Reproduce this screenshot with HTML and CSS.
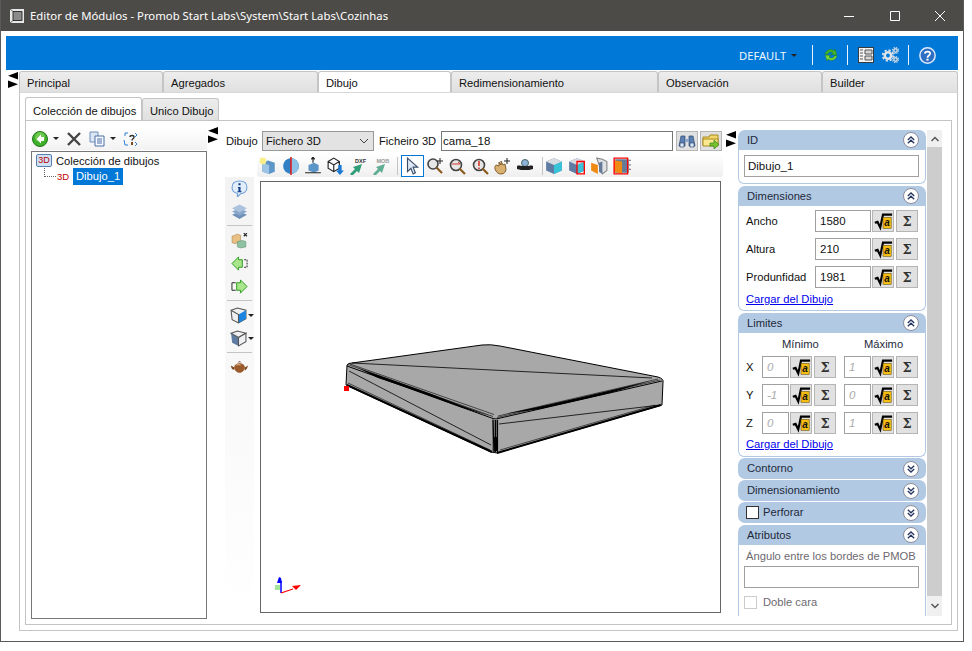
FILE: index.html
```html
<!DOCTYPE html>
<html lang="es">
<head>
    <meta charset="UTF-8">
    <title>Editor de Módulos</title>
    <link rel="stylesheet" href="styles.css">
</head>
<body>

<svg class="sprite" xmlns="http://www.w3.org/2000/svg">
    <symbol id="i-split" viewBox="0 0 10 16"><path d="M10 0v7.500L0 3.750z M0 8.500l10 3.750L0 16z" fill="#000"/></symbol>
    <symbol id="i-sqrt" viewBox="0 0 22 22"><path d="M2 13l3-1 3 6 3-14h10" fill="none" stroke="#000" stroke-width="2.400"/><rect x="11" y="7" width="9" height="12" fill="#f7bd13" stroke="#5c4800" stroke-width=".6"/><text class="sqrt-a" x="12.500" y="17">a</text></symbol>
    <symbol id="i-up" viewBox="0 0 16 16"><circle cx="8" cy="8" r="7.500" fill="#fff" stroke="#8d8d98"/><path d="M4.800 8L8 5l3.200 3M4.800 11.200L8 8.200l3.200 3" fill="none" stroke="#26365f" stroke-width="1.300"/></symbol>
    <symbol id="i-down" viewBox="0 0 16 16"><circle cx="8" cy="8" r="7.500" fill="#fff" stroke="#8d8d98"/><path d="M4.800 4.800L8 7.800l3.200-3M4.800 8L8 11l3.200-3" fill="none" stroke="#26365f" stroke-width="1.300"/></symbol>
    <symbol id="i-cube" viewBox="0 0 16 16"><path d="M1 4l7-3 7 3v8l-7 3-7-3z" fill="#5f7da3"/><path d="M8 7l7-3v8l-7 3z" fill="#37c4d8"/><path d="M1 4l7-3 7 3-7 3z" fill="#d9dde2"/></symbol>
</svg>

<div class="window">
    <div class="titlebar">
        <svg class="app-icon" viewBox="0 0 16 16"><path d="M1 1h14v14H1z" fill="#e8e8e8"/><path d="M4 3.500h9v9H4z" fill="#8a8a8a" stroke="#333"/><path d="M1 1l3 2.500M1 15l3-2.500" stroke="#666"/></svg>
        <span class="title">Editor de Módulos - Promob Start Labs\System\Start Labs\Cozinhas</span>
        <span class="win-btn"><svg width="12" height="12" viewBox="0 0 12 12"><path d="M1 6.500h10" stroke="#fff"/></svg></span>
        <span class="win-btn"><svg width="12" height="12" viewBox="0 0 12 12"><path d="M1.500 1.500h9v9h-9z" fill="none" stroke="#fff"/></svg></span>
        <span class="win-btn"><svg width="12" height="12" viewBox="0 0 12 12"><path d="M1 1l10 10M11 1L1 11" stroke="#fff"/></svg></span>
    </div>

    <div class="client">
        <div class="topbar">
            <span class="profile">DEFAULT</span>
            <span class="caret caret-top"></span>
            <span class="bar-sep sep-a"></span>
            <svg class="bar-ico ico-sync" viewBox="0 0 16 16"><path d="M2 7c1-4 6-6 9-3l1-2 2 6-6-.500 2-1.500C8 4 5 5 4.500 7.500z" fill="#43b52d" stroke="#1f7a16" stroke-width=".5"/><path d="M14 9c-1 4-6 6-9 3l-1 2-2-6 6 .500-2 1.500c2 2 5 1 5.500-1.500z" fill="#78d63a" stroke="#1f7a16" stroke-width=".5"/></svg>
            <span class="bar-sep sep-b"></span>
            <svg class="bar-ico ico-book" viewBox="0 0 16 16"><path d="M0 0h16v16H0z" fill="#3a3a3a"/><path d="M1 1h14v14H1z" fill="#f4f4f4"/><path d="M2 3h3M2 6h3M2 9h3M2 12h3" stroke="#555"/><path d="M7 3h7v4H7zM7 9h7v4H7z" fill="#d6d6d6" stroke="#555"/></svg>
            <svg class="bar-ico ico-gears" viewBox="0 0 17 16"><circle cx="6" cy="8.500" r="3.200" fill="none" stroke="#dfe4ea" stroke-width="2.600"/><circle cx="6" cy="8.500" r="5.300" fill="none" stroke="#dfe4ea" stroke-width="1.800" stroke-dasharray="2.200 1.950"/><circle cx="13.500" cy="3.500" r="1.700" fill="none" stroke="#d5dbe2" stroke-width="1.500"/><circle cx="13.500" cy="3.500" r="3" fill="none" stroke="#d5dbe2" stroke-width="1.100" stroke-dasharray="1.300 1.050"/><circle cx="13.500" cy="12.500" r="1.700" fill="none" stroke="#d5dbe2" stroke-width="1.500"/><circle cx="13.500" cy="12.500" r="3" fill="none" stroke="#d5dbe2" stroke-width="1.100" stroke-dasharray="1.300 1.050"/></svg>
            <span class="bar-sep sep-c"></span>
            <svg class="bar-ico ico-help" viewBox="0 0 16 16"><circle cx="8" cy="8" r="7.200" fill="#2e6fc4" stroke="#dfeafa" stroke-width="1.400"/><path d="M5.500 6.200C5.700 3.700 10.500 3.700 10.500 6.200 10.500 8 8 8 8 10" fill="none" stroke="#fff" stroke-width="1.600"/><path d="M7 11h2v1.800H7z" fill="#fff"/></svg>
        </div>

        <div class="main">
            <svg class="split split-main"><use href="#i-split"/></svg>
            <div class="outer">
                <div class="tabs">
                    <div class="tab t1">Principal</div>
                    <div class="tab t2">Agregados</div>
                    <div class="tab t3 active">Dibujo</div>
                    <div class="tab t4">Redimensionamiento</div>
                    <div class="tab t5">Observación</div>
                    <div class="tab t6">Builder</div>
                </div>
                <div class="outer-panel">
                    <div class="tabs inner-tabs">
                        <div class="tab t7 active">Colección de dibujos</div>
                        <div class="tab t8">Unico Dibujo</div>
                    </div>
                    <div class="inner-panel">

                        <div class="left-col">
                            <div class="tree-tools">
                                <svg class="tool t-back" viewBox="0 0 16 16"><circle cx="8" cy="8" r="7.500" fill="#3fae2a" stroke="#1f7a16"/><circle cx="8" cy="6" r="5" fill="#9be36f" opacity=".5"/><path d="M9 3.500L4.500 8 9 12.500V10h3V6H9z" fill="#fff"/></svg>
                                <span class="caret c-back"></span>
                                <svg class="tool t-del" viewBox="0 0 16 16"><path d="M2 2l12 12M14 2L2 14" stroke="#444" stroke-width="2.400"/></svg>
                                <svg class="tool t-copy" viewBox="0 0 16 16"><path d="M1 1h8v10H1z" fill="#dce7f6" stroke="#6f8db8"/><path d="M6 5h9v10H6z" fill="#f6f9ff" stroke="#4c6ea3"/><path d="M8 8h5M8 10h5M8 12h5" stroke="#4c6ea3"/></svg>
                                <span class="caret c-copy"></span>
                                <svg class="tool t-tree" viewBox="0 0 16 16"><path d="M3 5V2h3M13 2l2 2-2 2M2 9l1 5h3M13 11l2 2-2 2" fill="none" stroke="#2f7fd6"/><path d="M8 6c0-2 4-2 4 0 0 2-2 1.500-2 3.500" fill="none" stroke="#333" stroke-width="1.400"/><path d="M9 11h2v3H9z" fill="#7a4a1c"/></svg>
                            </div>
                            <div class="tree">
                                <div class="node">
                                    <span class="badge">3D</span>
                                    <span>Colección de dibujos</span>
                                </div>
                                <div class="node sub">
                                    <span class="branch"></span>
                                    <span class="red3d">3D</span>
                                    <span class="selected">Dibujo_1</span>
                                </div>
                            </div>
                        </div>

                        <div class="arrow-col first"><svg class="split"><use href="#i-split"/></svg></div>

                        <div class="mid-col">
                            <div class="file-row">
                                <span class="lbl-dibujo">Dibujo</span>
                                <div class="select">
                                    <span>Fichero 3D</span>
                                    <svg width="10" height="6" viewBox="0 0 10 6"><path d="M1 1l4 4 4-4" fill="none" stroke="#444"/></svg>
                                </div>
                                <span class="lbl-file">Ficheiro 3D</span>
                                <input class="field file-input" value="cama_18">
                                <span class="btn file-btn"><svg width="18" height="16" viewBox="0 0 18 16"><path d="M3 3h4v10H1z" fill="#5b7fb0" stroke="#2e4a73" stroke-width=".7"/><path d="M11 3h4l2 10h-6z" fill="#5b7fb0" stroke="#2e4a73" stroke-width=".7"/><path d="M7 6h4v3H7z" fill="#8ea7c9"/><path d="M2 10h4v4H2zM12 10h4v4h-4z" fill="#dfe9f6" stroke="#2e4a73" stroke-width=".7"/></svg></span>
                                <span class="btn file-btn"><svg width="18" height="16" viewBox="0 0 18 16"><path d="M1 4h6l1-2h8v10H1z" fill="#f3d66b" stroke="#a68a1e"/><path d="M1 6h15v7H1z" fill="#fbe88f" stroke="#a68a1e"/><path d="M8 10h4V7l5 4.500L12 16v-3H8z" fill="#76c52f" stroke="#3f7f14" stroke-width=".7"/></svg></span>
                            </div>

                            <div class="view-tools">
                                <span class="vt"><svg class="ic" viewBox="0 0 16 16"><path d="M3 5l5-2 6 2v8l-5 2-6-2z" fill="#5c95c7"/><path d="M3 5l6 2v8l-6-2z" fill="#9cc4e4"/><circle cx="3.500" cy="3.500" r="3" fill="#f8ef8b"/></svg></span>
                                <span class="vt"><svg class="ic" viewBox="0 0 16 16"><circle cx="8" cy="8" r="7" fill="#2f80c4"/><path d="M8 1a7 7 0 0 1 0 14z" fill="#8dc0e6"/><path d="M8 0v16" stroke="#e21b1b" stroke-width="1.400"/></svg></span>
                                <span class="vt"><svg class="ic" viewBox="0 0 16 16"><path d="M4 7l5-2 4 2v5l-4 2-5-2z" fill="#5c95c7"/><path d="M8 5V0M6.500 2L8 0l1.500 2M1 14h14" stroke="#222"/></svg></span>
                                <span class="vt"><svg class="ic" viewBox="0 0 16 16"><path d="M1 4l5-3 5 3v6l-5 3-5-3zM1 4l5 3 5-3M6 7v6" fill="#fff" stroke="#222"/><path d="M10 7h3v5h2l-3.500 4L8 12h2z" fill="#1b78d3"/></svg></span>
                                <span class="vt"><svg class="ic" viewBox="0 0 18 18"><path d="M1 17l5-5-2-2 9-3-3 9-2-2-5 5z" fill="#2f9d77"/><text class="mini-tag" x="6" y="6">DXF</text></svg></span>
                                <span class="vt"><svg class="ic" viewBox="0 0 18 18"><path d="M1 17l5-5-2-2 9-3-3 9-2-2-5 5z" fill="#5fae93"/><text class="mini-tag pale" x="4.500" y="6">MOB</text></svg></span>
                                <span class="tool-sep sep-one"></span>
                                <span class="vt selected-tool"><svg class="ic" viewBox="0 0 16 16"><path d="M4 1v12l3-3 2 5 2-1-2-5h4z" fill="#dfe8f5" stroke="#3b4c66"/></svg></span>
                                <span class="vt"><svg class="ic" viewBox="0 0 18 18"><circle cx="7" cy="7" r="5" fill="#e6e6e6" stroke="#444" stroke-width="1.600"/><path d="M10.500 10.500L16 16" stroke="#8a5a1e" stroke-width="2.200"/><path d="M14 1v6M11 4h6" stroke="#222"/></svg></span>
                                <span class="vt"><svg class="ic" viewBox="0 0 18 18"><circle cx="8" cy="8" r="5.500" fill="#e6e6e6" stroke="#444" stroke-width="1.600"/><path d="M11.500 11.500L17 17" stroke="#8a5a1e" stroke-width="2.200"/><path d="M4 7h8l-2-2" fill="none" stroke="#d63a2a"/></svg></span>
                                <span class="vt"><svg class="ic" viewBox="0 0 18 18"><circle cx="8" cy="8" r="5.500" fill="#e6e6e6" stroke="#444" stroke-width="1.600"/><path d="M11.500 11.500L17 17" stroke="#8a5a1e" stroke-width="2.200"/><path d="M8 4v5M8 10.500v1.500" stroke="#d63a2a" stroke-width="1.600"/></svg></span>
                                <span class="vt"><svg class="ic" viewBox="0 0 18 18"><path d="M3 14c-2-3-1-5 0-6l3 1V5l2 3V4l2 4 2-1 1 5c0 3-2 5-5 5-2 0-4-1-5-3z" fill="#d9b070" stroke="#6d4515" stroke-width=".8"/><path d="M14 1v6M11 4h6" stroke="#222"/></svg></span>
                                <span class="vt"><svg class="ic" viewBox="0 0 18 18"><circle cx="9" cy="6" r="3.500" fill="#8fb2d8" stroke="#466"/><path d="M1 9c2-1 4 0 5 0h6c1 0 3-1 5 0v3l-4 1H5l-4-1z" fill="#222"/></svg></span>
                                <span class="tool-sep sep-two"></span>
                                <span class="vt"><svg class="ic" viewBox="0 0 16 16"><use href="#i-cube"/></svg></span>
                                <span class="vt"><svg class="ic" viewBox="0 0 16 16"><use href="#i-cube"/><path d="M8 4h6.500v11H8z" fill="none" stroke="#f00" stroke-width="1.200"/></svg></span>
                                <span class="vt"><svg class="ic" viewBox="0 0 16 16"><path d="M6 1l5 1 4 2v8l-4 3z" fill="#e0e2e6" stroke="#888"/><path d="M8 5l3-1v11l-3-2z" fill="#667b98"/><path d="M1 5l6 2v8l-6-3z" fill="#f08a13"/></svg></span>
                                <span class="vt"><svg class="ic" viewBox="0 0 16 16"><path d="M2 2h12v12H2z" fill="#667b98"/><path d="M1 3l7 1v11l-7-2z" fill="#f08a13"/><path d="M1 1h12v14H1z" fill="none" stroke="#f00" stroke-width="1.200"/><path d="M14 3h2M14 7h2M14 11h2" stroke="#888"/></svg></span>
                            </div>

                            <div class="work">
                                <div class="side-tools">
                                    <span class="st"><svg class="ic" viewBox="0 0 16 16"><path d="M8 1c4 0 7 2 7 6s-3 6-6 6l-3 3v-3.500C3 12 1 10 1 7c0-4 3-6 7-6z" fill="#e2eefb" stroke="#6f9fd8"/><path d="M7 3h2v2H7zM6.500 6.500H9v4h1V11.500H6V10.500h1v-3h-.5z" fill="#143f8a"/></svg></span>
                                    <span class="st"><svg class="ic" viewBox="0 0 16 16"><path d="M1 11l7-3 7 3-7 4z" fill="#6f90b8"/><path d="M1 8l7-3 7 3-7 4z" fill="#8aa7cb"/><path d="M1 5l7-3.500L15 5l-7 4z" fill="#abc3df"/></svg></span>
                                    <span class="st-sep"></span>
                                    <span class="st"><svg class="ic" viewBox="0 0 16 16"><path d="M1 4l5-2 3 1v6l-5 2-3-1z" fill="#e9bf83" stroke="#a67f3e" stroke-width=".5"/><path d="M6 9l5-1 3 1v5l-5 1-3-1z" fill="#8fc2a2" stroke="#5a8f70" stroke-width=".5"/><path d="M12 1l3 3M15 1l-3 3" stroke="#222"/></svg></span>
                                    <span class="st"><svg class="ic" viewBox="0 0 18 16"><path d="M1 8l7-7v3h4v8H8v3z" fill="#a9e58a" stroke="#2c9a1e"/><path d="M14 4h3v8h-3" fill="none" stroke="#222" stroke-dasharray="2 1"/></svg></span>
                                    <span class="st"><svg class="ic" viewBox="0 0 18 16"><path d="M17 8l-7-7v3H6v8h4v3z" fill="#a9e58a" stroke="#2c9a1e"/><path d="M5 4H1v8h4" fill="none" stroke="#222"/></svg></span>
                                    <span class="st-sep"></span>
                                    <span class="st with-caret"><svg class="ic" viewBox="0 0 16 16"><path d="M1 3l6-2 8 2v8l-7 4-6-3z" fill="#eef0f2" stroke="#555"/><path d="M8 7l7-4v8l-7 4z" fill="#1b84e0"/><path d="M1 3l7 4v8" fill="none" stroke="#555"/></svg><span class="caret"></span></span>
                                    <span class="st with-caret"><svg class="ic" viewBox="0 0 16 16"><path d="M1 3l7 4v8l-6-3z" fill="#5f7da3"/><path d="M1 3l6-2 8 2-7 4z" fill="#eef0f2" stroke="#555"/><path d="M8 7l7-4v8l-7 4z" fill="#eef0f2" stroke="#555"/></svg><span class="caret"></span></span>
                                    <span class="st-sep"></span>
                                    <span class="st"><svg class="ic" viewBox="0 0 16 16"><path d="M3 8c0-3 3-4 5-4s5 1 5 4-3 5-5 5-5-2-5-5z" fill="#9a5a2c"/><path d="M13 8l3-2-1 3-2 2zM3 8L0 6c0 2 1 4 3 4z" fill="#7a431e"/><path d="M6 3h4l-2-1z" fill="#5e3113"/><path d="M5 6c1-1 3-1 4 0" stroke="#e0b48c" fill="none"/></svg></span>
                                </div>
                                <div class="viewport">
                                    <svg class="scene" viewBox="261 182 459 430">
                                        <path d="M347 365Q348 363 352 363L482 345Q490 344 500 346L658 377Q664 379 663 382L662 405L497 453L491 452L346 385z" fill="#a8a8a8" stroke="#000"/>
                                        <path d="M352 363L652 378M349 371L491 445M499 424L660 405" fill="none" stroke="#000" stroke-width=".8"/>
                                        <path d="M347 366L493 418.500L496 419L662 381" fill="none" stroke="#000"/>
                                        <path d="M348 364.500L493 416.500M350 364L494 414.500M497 417.500L660 380M498 416L658 379" fill="none" stroke="#000" stroke-width=".6"/>
                                        <path d="M358 368L378 375L405 384.500L430 393.500L460 405L490 416L460 407L430 396L405 387L378 378z" fill="#000"/>
                                        <path d="M505 414L540 406.500L580 397.500L610 390.500L650 381L610 393L580 400L540 409z" fill="#000"/>
                                        <path d="M492 419h6v32h-6z" fill="#777"/>
                                        <path d="M493 420L494 452M495.500 420v32M497.500 420v32" stroke="#000" stroke-width="1.200"/>
                                        <path d="M494 437h3v14h-3z" fill="#000"/>
                                        <path d="M347 385L492 452M497 453L661 405" fill="none" stroke="#000" stroke-width="2"/>
                                        <path d="M348 383L490 450M500 450L655 405" fill="none" stroke="#000" stroke-width=".6"/>
                                        <path d="M344 386h5v5h-5z" fill="#f00"/>
                                        <path d="M275 585h5v5h-5z" fill="#a6e69a"/>
                                        <path d="M281 593v-12" stroke="#00f" stroke-width="1.500"/>
                                        <path d="M277 583l2-6 2 1 1 5z" fill="#00f"/>
                                        <path d="M281 593l12-4" stroke="#f00" stroke-width="1.300"/>
                                        <path d="M292 586l9-1-5 5z" fill="#f00"/>
                                    </svg>
                                </div>
                            </div>
                        </div>

                        <div class="arrow-col second"><svg class="split"><use href="#i-split"/></svg></div>

                        <div class="right-col">
                            <div class="sections">
                                <div class="section">
                                    <div class="sec-head"><span>ID</span><svg class="chev"><use href="#i-up"/></svg></div>
                                    <div class="sec-body body-id"><input class="field wide" value="Dibujo_1"></div>
                                </div>
                                <div class="section">
                                    <div class="sec-head"><span>Dimensiones</span><svg class="chev"><use href="#i-up"/></svg></div>
                                    <div class="sec-body body-dim">
                                        <div class="row"><span class="row-lbl">Ancho</span><input class="field num" value="1580"><span class="btn calc"><svg><use href="#i-sqrt"/></svg></span><span class="btn sigma">Σ</span></div>
                                        <div class="row"><span class="row-lbl">Altura</span><input class="field num" value="210"><span class="btn calc"><svg><use href="#i-sqrt"/></svg></span><span class="btn sigma">Σ</span></div>
                                        <div class="row"><span class="row-lbl">Produnfidad</span><input class="field num" value="1981"><span class="btn calc"><svg><use href="#i-sqrt"/></svg></span><span class="btn sigma">Σ</span></div>
                                        <a class="link" href="#">Cargar del Dibujo</a>
                                    </div>
                                </div>
                                <div class="section sec-lim">
                                    <div class="sec-head"><span>Limites</span><svg class="chev"><use href="#i-up"/></svg></div>
                                    <div class="sec-body body-lim">
                                        <div class="lim-head"><span>Mínimo</span><span>Máximo</span></div>
                                        <div class="row"><span class="axis">X</span><input class="field lim" value="0" disabled><span class="btn calc"><svg><use href="#i-sqrt"/></svg></span><span class="btn sigma">Σ</span><input class="field lim lim-max" value="1" disabled><span class="btn calc"><svg><use href="#i-sqrt"/></svg></span><span class="btn sigma">Σ</span></div>
                                        <div class="row"><span class="axis">Y</span><input class="field lim" value="-1" disabled><span class="btn calc"><svg><use href="#i-sqrt"/></svg></span><span class="btn sigma">Σ</span><input class="field lim lim-max" value="0" disabled><span class="btn calc"><svg><use href="#i-sqrt"/></svg></span><span class="btn sigma">Σ</span></div>
                                        <div class="row"><span class="axis">Z</span><input class="field lim" value="0" disabled><span class="btn calc"><svg><use href="#i-sqrt"/></svg></span><span class="btn sigma">Σ</span><input class="field lim lim-max" value="1" disabled><span class="btn calc"><svg><use href="#i-sqrt"/></svg></span><span class="btn sigma">Σ</span></div>
                                        <a class="link" href="#">Cargar del Dibujo</a>
                                    </div>
                                </div>
                                <div class="section closed"><div class="sec-head"><span>Contorno</span><svg class="chev"><use href="#i-down"/></svg></div></div>
                                <div class="section closed"><div class="sec-head"><span>Dimensionamiento</span><svg class="chev"><use href="#i-down"/></svg></div></div>
                                <div class="section closed"><div class="sec-head"><span class="check-wrap"><span class="check"></span>Perforar</span><svg class="chev"><use href="#i-down"/></svg></div></div>
                                <div class="section last">
                                    <div class="sec-head"><span>Atributos</span><svg class="chev"><use href="#i-up"/></svg></div>
                                    <div class="sec-body body-attr">
                                        <div class="muted">Ángulo entre los bordes de PMOB</div>
                                        <input class="field wide" value="">
                                        <div class="check-row"><span class="check dim"></span><span class="muted">Doble cara</span></div>
                                    </div>
                                </div>
                            </div>
                            <div class="scrollbar">
                                <span class="sb-btn"><svg width="8" height="6" viewBox="0 0 8 6"><path d="M.5 5L4 1.500 7.500 5" fill="none" stroke="#555" stroke-width="1.500"/></svg></span>
                                <span class="sb-thumb"></span>
                                <span class="sb-btn"><svg width="8" height="6" viewBox="0 0 8 6"><path d="M.5 1L4 4.500 7.500 1" fill="none" stroke="#555" stroke-width="1.500"/></svg></span>
                            </div>
                        </div>

                    </div>
                </div>
            </div>
        </div>
    </div>
</div>

</body>
</html>
```

FILE: styles.css
```css
html, body {
    margin: 0;
    padding: 0;
    background: #fff;
}
body {
    font-family: "Liberation Sans", Arial, sans-serif;
    font-size: 11.200px;
    color: #111;
}
.sprite {
    display: none;
}
.window {
    width: 964px;
    height: 642px;
    box-sizing: border-box;
    border: 1px solid #5a5a5a;
    border-top: none;
    background: #fff;
    display: flex;
    flex-direction: column;
}
.titlebar {
    height: 31px;
    flex: none;
    background: #4d4b48;
    display: flex;
    align-items: center;
    color: #fff;
    font-family: "Noto Sans", sans-serif;
    font-size: 11.350px;
}
.app-icon {
    width: 16px;
    height: 16px;
    margin-left: 8px;
    margin-right: 5px;
}
.title {
    flex: 1;
}
.win-btn {
    width: 45.500px;
    display: flex;
    justify-content: center;
    align-items: center;
}
.client {
    flex: 1;
    padding: 5px 5px 0 5px;
    display: flex;
    flex-direction: column;
    min-height: 0;
}
.topbar {
    height: 34px;
    box-sizing: border-box;
    padding-top: 4px;
    flex: none;
    background: #0078d7;
    display: flex;
    align-items: center;
    color: #f2f7fc;
}
.profile {
    margin-left: 733px;
    font-family: "Noto Sans", sans-serif;
    font-size: 11.200px;
}
.caret {
    display: inline-block;
    width: 0;
    height: 0;
    border-left: 3px solid transparent;
    border-right: 3px solid transparent;
    border-top: 3px solid #222;
}
.caret-top {
    margin-left: 5px;
}
.bar-sep {
    width: 1px;
    height: 20px;
    background: #eaf3fb;
}
.sep-a {
    margin-left: 15px;
}
.sep-b {
    margin-left: 8px;
}
.sep-c {
    margin-left: 9px;
}
.bar-ico {
    width: 16px;
    height: 16px;
    flex: none;
}
.ico-sync {
    margin-left: 10px;
}
.ico-book {
    margin-left: 10px;
}
.ico-gears {
    width: 17px;
    margin-left: 8px;
}
.ico-help {
    width: 17px;
    height: 17px;
    margin-left: 10px;
}
.main {
    flex: 1;
    display: flex;
    min-height: 0;
    padding-top: 1px;
}
.split {
    width: 10px;
    height: 16px;
    flex: none;
}
.split-main {
    margin: 1px 1px 0 2px;
}
.outer {
    width: 939px;
    display: flex;
    flex-direction: column;
}
.tabs {
    display: flex;
    height: 21px;
    flex: none;
}
.tab {
    box-sizing: border-box;
    border: 1px solid #c4c4c4;
    border-bottom: none;
    border-radius: 3px 3px 0 0;
    background: linear-gradient(#ededed, #e0e0e0);
    padding: 4px 0 0 7px;
    line-height: 15px;
    white-space: nowrap;
}
.tab.active {
    background: #fff;
}
.t1 { width: 144px; }
.t2 { width: 155px; }
.t3 { width: 133px; }
.t4 { width: 207px; }
.t5 { width: 164px; }
.t6 { width: 136px; }
.t7 { width: 117px; padding-top: 6px; margin-top: -1px; height: 23px; }
.t8 { width: 77px; padding-top: 5px; height: 22px; }
.outer-panel {
    height: 539px;
    box-sizing: border-box;
    border: 1px solid #c4c4c4;
    border-top: 1px solid #d8d8d8;
    padding: 5px;
    display: flex;
    flex-direction: column;
}
.inner-tabs {
    height: 22px;
}
.inner-panel {
    flex: 1;
    min-height: 0;
    border: 1px solid #c4c4c4;
    display: flex;
    padding-left: 5px;
}
.left-col {
    width: 176px;
    padding-top: 6px;
    flex: none;
}
.tree-tools {
    height: 23px;
    box-sizing: border-box;
    background: linear-gradient(#fff, #f2f2f2);
    display: flex;
    align-items: center;
    padding-left: 1px;
}
.tool {
    width: 16px;
    height: 16px;
    flex: none;
}
.c-back { margin-left: 5px; }
.t-del { margin-left: 7px; }
.t-copy { margin-left: 7px; }
.c-copy { margin-left: 5px; }
.t-tree { margin-left: 6px; }
.tree {
    height: 468px;
    margin-top: 1px;
    box-sizing: border-box;
    width: 176px;
    border: 1px solid #777;
    background: #fff;
    padding: 1px 4px;
}
.node {
    display: flex;
    align-items: center;
    height: 15px;
}
.badge {
    width: 16px;
    height: 13px;
    box-sizing: border-box;
    border: 1px solid #5a7fae;
    border-radius: 2px;
    background: #cfe3f7;
    color: #c00000;
    font-size: 9px;
    line-height: 11px;
    text-align: center;
    margin-right: 4px;
}
.sub {
    height: 17px;
}
.branch {
    width: 12px;
    height: 9px;
    margin-left: 8px;
    margin-top: -9px;
    box-sizing: border-box;
    border-left: 1px dotted #666;
    border-bottom: 1px dotted #666;
}
.red3d {
    color: #c00000;
    font-size: 9.500px;
    width: 16px;
    margin-left: 1px;
}
.selected {
    background: #0078d7;
    color: #fff;
    padding: 1px 3px 2px 3px;
    line-height: 14px;
}
.arrow-col {
    flex: none;
}
.arrow-col.first {
    width: 18px;
    padding: 6px 0 0 1px;
    box-sizing: border-box;
}
.arrow-col.second {
    width: 15px;
    padding: 10px 0 0 3px;
    box-sizing: border-box;
}
.mid-col {
    width: 498px;
    flex: none;
    padding-top: 10px;
}
.file-row {
    display: flex;
    align-items: center;
    height: 20px;
}
.lbl-dibujo {
    margin-left: 1px;
    width: 36px;
}
.select {
    width: 112px;
    height: 20px;
    box-sizing: border-box;
    border: 1px solid #999;
    background: #e3e3e3;
    display: flex;
    align-items: center;
    justify-content: space-between;
    padding: 0 4px 0 3px;
}
.lbl-file {
    margin-left: 5px;
    width: 62px;
}
.field {
    box-sizing: border-box;
    border: 1px solid #a0a0a0;
    background: #fff;
    font-family: "Liberation Sans", Arial, sans-serif;
    font-size: 11.500px;
    color: #111;
    padding: 0 3px;
    margin: 0;
    outline: none;
    border-radius: 0;
}
.file-input {
    width: 232px;
    height: 20px;
    border-color: #777;
    padding-left: 1px;
}
.btn {
    display: flex;
    align-items: center;
    justify-content: center;
    box-sizing: border-box;
    border: 1px solid #b5b5b5;
    background: #e1e1e1;
    flex: none;
}
.file-btn {
    width: 22px;
    height: 20px;
    margin-left: 3px;
}
.file-btn + .file-btn {
    margin-left: 2px;
}
.view-tools {
    height: 23px;
    width: 466px;
    margin: 3px 0 0 32px;
    background: linear-gradient(#fff, #efefef);
    border-radius: 3px;
    display: flex;
    align-items: center;
}
.vt {
    width: 22.500px;
    height: 22px;
    box-sizing: border-box;
    display: flex;
    align-items: center;
    justify-content: center;
    flex: none;
}
.vt .ic {
    width: 18px;
    height: 18px;
}
.ic {
    width: 17px;
    height: 17px;
    flex: none;
}
.mini-tag {
    font-family: "Liberation Sans", Arial, sans-serif;
    font-size: 5.500px;
    font-weight: bold;
    fill: #333;
}
.mini-tag.pale {
    fill: #999;
}
.sqrt-a {
    font-family: "Liberation Sans", Arial, sans-serif;
    font-size: 11px;
    font-weight: bold;
    font-style: italic;
    fill: #111;
}
.tool-sep {
    width: 1px;
    height: 18px;
    background: #c4c4c4;
    flex: none;
}
.sep-one {
    margin: 0 3px 0 5px;
}
.sep-two {
    margin: 0 0 0 6px;
}
.selected-tool {
    border: 1px solid #0078d7;
    background: #fff;
}
.work {
    display: flex;
}
.side-tools {
    width: 29px;
    height: 438px;
    flex: none;
    background: linear-gradient(#f3f3f3, #fff);
    display: flex;
    flex-direction: column;
    align-items: center;
}
.st {
    height: 23px;
    width: 100%;
    display: flex;
    align-items: center;
    justify-content: center;
    flex: none;
}
.st-sep {
    width: 25px;
    height: 1px;
    background: #c4c4c4;
    margin: 2px 0 3px;
    flex: none;
}
.with-caret .caret {
    margin-left: 1px;
    margin-right: -5px;
}
.viewport {
    width: 461px;
    height: 432px;
    box-sizing: border-box;
    margin: 4px 0 0 6px;
    border: 1px solid #666;
    background: #fff;
    flex: none;
}
.scene {
    display: block;
    width: 459px;
    height: 430px;
}
.right-col {
    display: flex;
    flex: none;
    padding-top: 9px;
}
.sections {
    width: 188px;
    margin-right: 1px;
    display: flex;
    flex-direction: column;
}
.section {
    margin-bottom: 2px;
}
.section.sec-lim,
.section.closed {
    margin-bottom: 1px;
}
.section.closed + .section.last {
    margin-top: 1px;
}
.sec-head {
    height: 20px;
    background: #b2c9e4;
    border-radius: 7px 7px 0 0;
    display: flex;
    align-items: center;
    justify-content: space-between;
    padding: 0 7px 0 9px;
    color: #1e2a3a;
}
.closed .sec-head {
    height: 21px;
    border-radius: 7px;
}
.closed .sec-head > span:first-child {
    margin-bottom: 1px;
}
.chev {
    width: 16px;
    height: 16px;
    flex: none;
}
.sec-body {
    box-sizing: border-box;
    border: 1px solid #b2c9e4;
    border-top: none;
    border-radius: 0 0 6px 6px;
    background: #fff;
}
.body-id {
    height: 34px;
    padding: 5px 0 0 5px;
}
.wide {
    width: 175px;
    height: 22px;
    display: block;
}
.body-dim {
    height: 105px;
    padding-top: 4px;
}
.body-lim {
    height: 124px;
}
.row {
    display: flex;
    align-items: center;
    height: 22px;
    margin-bottom: 6px;
    padding-left: 7px;
}
.row-lbl {
    width: 69px;
    flex: none;
}
.num {
    width: 56px;
    height: 22px;
    padding-left: 4px;
    flex: none;
}
.calc {
    width: 22px;
    height: 22px;
    margin-left: 1px;
}
.calc svg {
    width: 20px;
    height: 20px;
}
.sigma {
    width: 22px;
    height: 22px;
    margin-left: 2px;
    font-family: "DejaVu Serif", serif;
    font-size: 13px;
    font-weight: bold;
    color: #333;
}
.link {
    display: block;
    margin-left: 7px;
    color: #0000ee;
    line-height: 14px;
    margin-top: -2px;
}
.body-lim .link {
    margin-top: -3px;
}
.lim-head {
    display: flex;
    height: 22px;
    margin-bottom: 1px;
    align-items: center;
    padding-left: 43px;
    box-sizing: border-box;
    color: #1e2a3a;
}
.lim-head span {
    width: 82px;
    flex: none;
}
.axis {
    width: 16px;
    flex: none;
}
.lim {
    width: 27px;
    height: 22px;
    flex: none;
    font-style: italic;
    color: #aaa;
    padding-left: 4px;
}
.lim-max {
    margin-left: 8px;
}
.check-wrap {
    display: flex;
    align-items: center;
}
.check {
    display: inline-block;
    width: 13px;
    height: 13px;
    box-sizing: border-box;
    border: 1px solid #333;
    background: #fff;
    margin-right: 4px;
    margin-left: -1px;
    flex: none;
}
.check.dim {
    border-color: #ccc;
    margin-left: 0;
}
.section.last {
    margin-bottom: 0;
}
.last .sec-head span {
    margin-bottom: 1px;
}
.body-attr {
    height: 71px;
    padding: 4px 0 0 5px;
    border-bottom: none;
    border-radius: 0;
}
.muted {
    color: #6e6a70;
    line-height: 14px;
    padding-left: 2px;
    white-space: nowrap;
}
.body-attr .wide {
    margin-top: 3px;
}
.check-row {
    display: flex;
    align-items: center;
    margin-top: 7px;
}
.scrollbar {
    width: 15px;
    height: 486px;
    flex: none;
    display: flex;
    flex-direction: column;
    background: #f0f0f0;
}
.sb-btn {
    height: 17px;
    display: flex;
    align-items: center;
    justify-content: center;
    flex: none;
}
.sb-btn:last-child {
    height: 20px;
}
.sb-thumb {
    flex: 1;
    background: #cdcdcd;
}
```
